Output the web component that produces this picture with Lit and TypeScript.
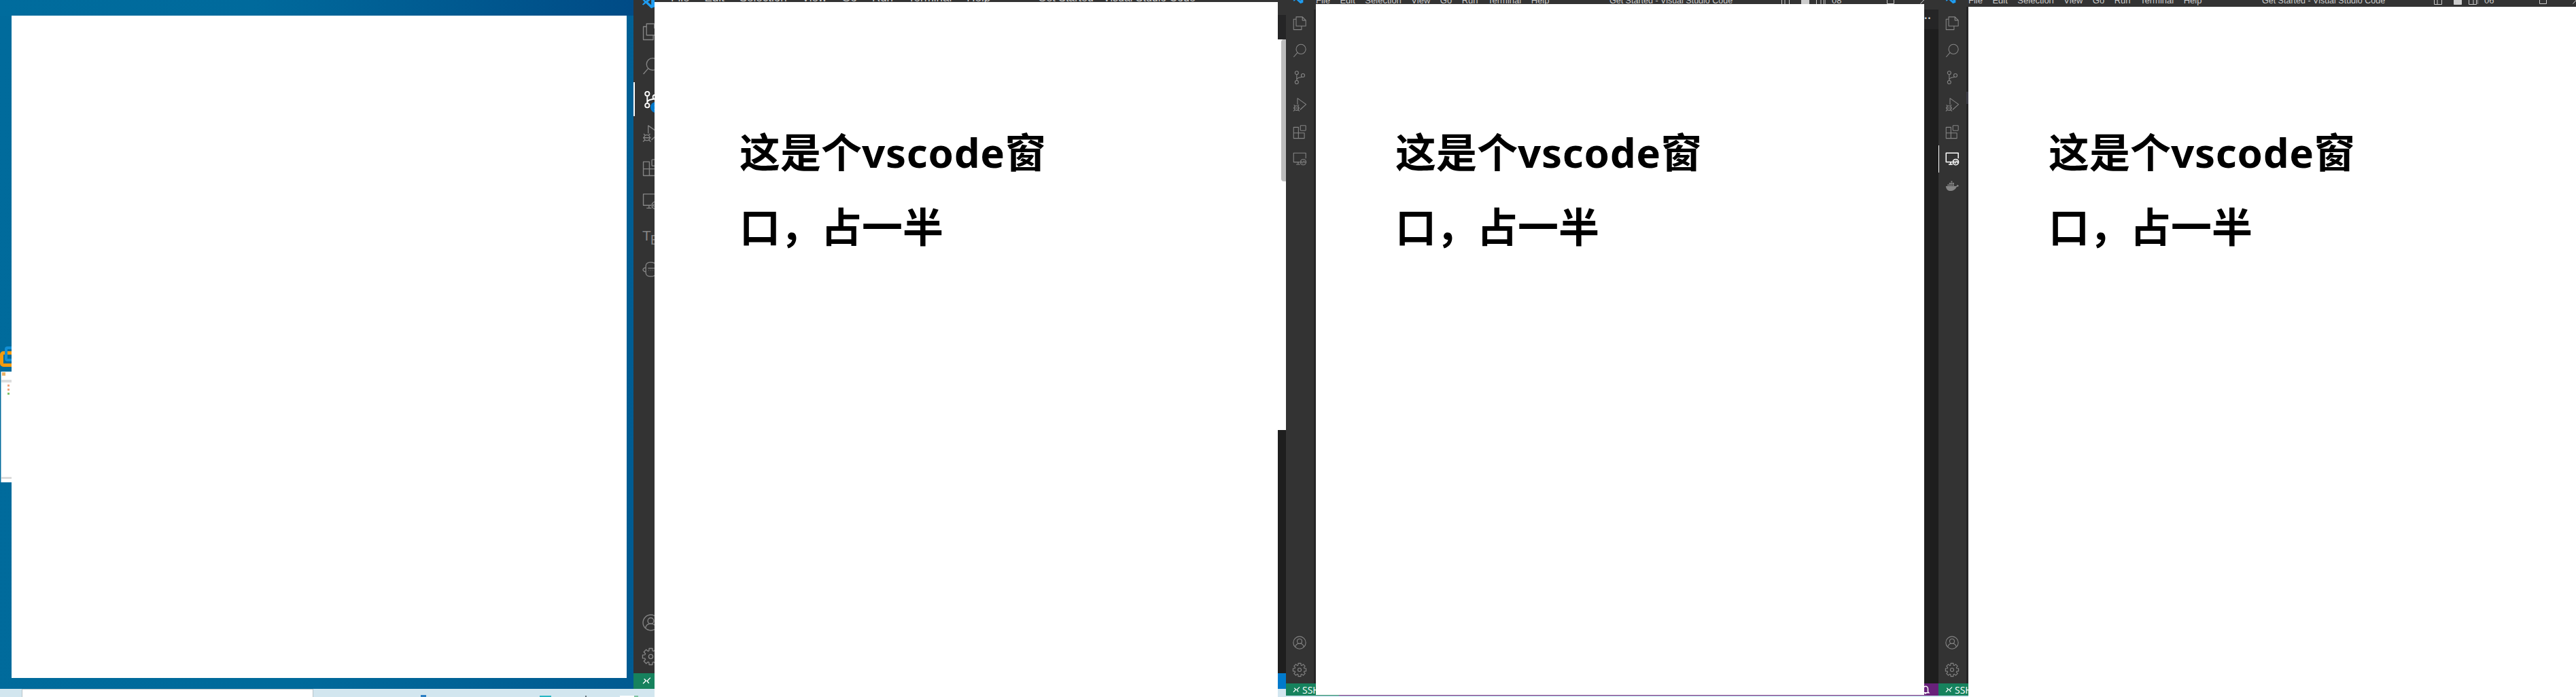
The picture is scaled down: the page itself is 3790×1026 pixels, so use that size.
import { LitElement, css, html, svg } from 'lit';
import { customElement, property } from 'lit/decorators.js';
import { styleMap } from 'lit/directives/style-map.js';

// Контур шестерёнки: 8 зубцов
const gearPath = () => {
  const points: string[] = [];
  for (let i = 0; i < 8; i++) {
    const a = (i * Math.PI) / 4;
    const at = (r: number, d: number) =>
      `${(12 + r * Math.cos(a + d)).toFixed(2)} ${(12 + r * Math.sin(a + d)).toFixed(2)}`;
    points.push(at(8.6, -0.3), at(11.8, -0.2), at(11.8, 0.2), at(8.6, 0.3));
  }
  return `M${points.join('L')}z`;
};

// Значки панели активности, сетка 24x24
const ICONS: Record<string, unknown> = {
  files: svg`<path d="M6 1H17L23 7V17H6zM17 1V7H23M6 5H1.500V23.500H15.500V17"/>`,
  search: svg`<circle cx="14.500" cy="10" r="8.500"/><path d="M8.500 16 1.500 24"/>`,
  git: svg`<circle cx="7" cy="3.800" r="3"/><circle cx="7" cy="20.400" r="3"/><circle cx="18" cy="8.400" r="3"/><path d="M7 6.800V17.400M7 16c.5-3 3-3.500 5.500-4 2.500-.5 3.500-.8 4.200-1"/>`,
  debug: svg`<path d="M8.400 12V.8L23.500 11.500 13 21"/><circle cx="6.500" cy="18" r="4"/><path d="M2 12.500 4 14.500M11 12.500 9 14.500M1 18H12M1 23.500l3-2.500M12 23.500l-3-2.500"/>`,
  extensions: svg`<rect x="13.500" y=".8" width="9.500" height="9" rx="1"/><path d="M1.500 4H10V14H20.500V23.500H1.500zM1.500 14H10V23.500"/>`,
  remote: svg`<path d="M12.500 17.500H1.500V1.500H23V11M6 21.500H13M9.500 17.500V21.500"/><circle cx="18.500" cy="17.500" r="5"/><path d="M17.500 20l2-5M16.500 16l-1.500 1.500 1.500 1.500M20.500 16l1.500 1.500-1.500 1.500"/>`,
  account: svg`<circle cx="12" cy="12" r="11"/><circle cx="12" cy="9.500" r="4.200"/><path d="M4.500 20c.5-4 3-6.500 7.500-6.500s7 2.500 7.500 6.500"/>`,
  gear: svg`<path d=${gearPath()}/><circle cx="12" cy="12" r="3"/>`,
  face: svg`<path d="M5 7C5 3.500 8 2 12 2s7 1.500 7 5v10c0 3.500-3 5-7 5s-7-1.500-7-5zM5 9.500C2.500 10 1 11 1 12.500S2.500 15 5 15.500M19 9.500c2.500.5 4 1.500 4 3s-1.500 2.500-4 3M8 10.500H19M9 13.500h.5M12 13.500h.5M15 13.500h.5"/>`,
  docker: svg`<path fill="#858585" stroke="none" d="M1 12H19.500C20.500 11 21 10 20.500 9.500L22 10C23 10.500 24 11 24 11.500 23 13 21.500 13.500 20 13.500 18 18 14 20.500 9 20.500 4 20.500 1.500 17 1 12z"/><path fill="#858585" stroke="none" d="M4 9h2.500v2.500H4zM7 9h2.500v2.500H7zM10 9h2.500v2.500H10zM13 9h2.500v2.500H13zM7 6h2.500v2.500H7zM10 6h2.500v2.500H10zM13 6h2.500v2.500H13zM10 3h2.500v2.500H10z"/>`,
};

type BarItem = { name: string; active?: boolean };

@customElement('activity-bar')
export class ActivityBar extends LitElement {
  // Шаг значков: 40 или 50
  @property({ type: Number }) pitch = 40;

  // Верхние значки
  @property({ attribute: false }) items: BarItem[] = [];

  static styles = css`
    :host {
      display: flex;
      flex-direction: column;
      height: 100%;
      background: #333333;
      box-sizing: border-box;
    }

    .bar__top,
    .bar__bottom {
      display: flex;
      flex-direction: column;
    }

    .bar__bottom {
      margin-top: auto;
    }

    .bar__slot {
      position: relative;
      display: flex;
      align-items: center;
      box-sizing: border-box;
    }

    .bar__slot svg {
      display: block;
      flex: none;
      fill: none;
      stroke: #858585;
      stroke-width: 1.300;
      stroke-linejoin: round;
      overflow: visible;
    }

    .bar__slot--active svg {
      stroke: #ffffff;
      stroke-width: 1.800;
    }

    .bar__marker {
      position: absolute;
      left: 0;
      top: 0;
      bottom: 0;
      background: #ffffff;
    }

    .bar__tex {
      color: #858585;
      font-family: 'Liberation Sans', sans-serif;
      font-size: 21px;
      line-height: 1;
      white-space: nowrap;
    }

    .bar__tex-e {
      position: relative;
      top: 6px;
      margin-left: -1px;
    }

    .bar__badge {
      position: absolute;
      left: 25px;
      top: 29px;
      width: 16px;
      height: 16px;
      border-radius: 50%;
      background: #007acc;
      color: #fff;
      font: 700 10px 'Liberation Sans', sans-serif;
      display: flex;
      align-items: center;
      justify-content: center;
    }
  `;

  private slotStyle(iconLeft: number) {
    return styleMap({ height: `${this.pitch}px`, paddingLeft: `${iconLeft}px` });
  }

  private renderItem(item: BarItem) {
    const big = this.pitch === 50;
    const size = big ? 25 : 20;
    const left = big ? 13 : 10;
    if (item.name === 'tex') {
      return html`<div class="bar__slot" style=${this.slotStyle(left)}>
        <span class="bar__tex">T<span class="bar__tex-e">E</span>X</span>
      </div>`;
    }
    return html`<div class="bar__slot ${item.active ? 'bar__slot--active' : ''}" style=${this.slotStyle(left)}>
      ${item.active
        ? html`<span class="bar__marker" style=${styleMap({ width: big ? '2px' : '1px' })}></span>`
        : ''}
      <svg viewBox="0 0 24 24" width=${size} height=${size}>${ICONS[item.name]}</svg>
      ${item.active && big ? html`<span class="bar__badge">1</span>` : ''}
    </div>`;
  }

  render() {
    const big = this.pitch === 50;
    return html`
      <div class="bar__top" style=${styleMap({ marginTop: big ? '21px' : '14px' })}>
        ${this.items.map((item) => this.renderItem(item))}
      </div>
      <div class="bar__bottom" style=${styleMap({ marginBottom: big ? '0' : '0' })}>
        ${this.renderItem({ name: 'account' })} ${this.renderItem({ name: 'gear' })}
      </div>
    `;
  }
}

@customElement('app-root')
export class AppRoot extends LitElement {
  static styles = css`
    :host {
      display: flex;
      width: 3790px;
      height: 1026px;
      overflow: hidden;
      background: #d2e6ef;
      font-family: 'Noto Sans', 'Noto Sans CJK SC', sans-serif;
    }

    .desktop {
      width: 932px;
      flex: none;
      display: flex;
      flex-direction: column;
    }

    .desktop__wall {
      height: 1014px;
      flex: none;
      box-sizing: border-box;
      padding: 23px 10px 16px 17px;
      background: linear-gradient(100deg, #006b9c 0%, #006a9b 55%, #005a91 100%);
      position: relative;
      overflow: hidden;
    }

    .desktop__wall::before {
      content: '';
      position: absolute;
      left: 0;
      right: 0;
      top: 0;
      height: 23px;
      background: linear-gradient(90deg, #006c9d 0%, #006a9c 40%, #004b86 100%);
    }

    .desktop__window {
      height: 100%;
      background: #fff;
      position: relative;
    }

    .desktop__strip {
      flex: 1;
      display: flex;
      align-items: flex-end;
      padding-left: 32px;
    }

    .desktop__search {
      width: 429px;
      height: 100%;
      flex: none;
      box-sizing: border-box;
      background: #fff;
      border: 1px solid #b9c4c9;
      border-bottom: 0;
    }

    .crumb {
      flex: none;
      height: 2px;
    }

    .tile {
      position: absolute;
      left: 0;
      top: 517px;
      width: 30px;
      height: 23px;
      box-sizing: border-box;
      border: 5px solid #f39a0e;
      border-radius: 5px;
    }

    .tile--blue {
      left: 7px;
      top: 510px;
      width: 20px;
      height: 22px;
      border: 4px solid #1290d6;
      border-radius: 4px;
    }

    .thumb {
      position: absolute;
      left: 1px;
      top: 547px;
      width: 16px;
      height: 163px;
      box-sizing: border-box;
      background: #fff;
      border-left: 1px solid #8fbcd2;
      display: flex;
      flex-direction: column;
    }

    .thumb__head {
      height: 5px;
      width: 5px;
      margin: 1px 0 0 1px;
      background: #e9b36a;
    }

    .thumb__band {
      height: 4px;
      margin-top: 6px;
      background: #dddddd;
    }

    .thumb__tick {
      width: 3px;
      height: 3px;
      margin: 3px 0 0 9px;
    }

    .thumb__foot {
      height: 3px;
      margin-top: auto;
      margin-bottom: 5px;
      background: #dcdcdc;
    }

    .side {
      flex: none;
      display: flex;
      flex-direction: column;
      background: #333333;
      overflow: hidden;
      position: relative;
    }

    .side__body {
      flex: 1;
      min-height: 0;
    }

    .side--one {
      width: 31px;
      height: 1014px;
    }

    .status {
      flex: none;
      height: 23px;
      padding-left: 13px;
      background: #16825d;
      display: flex;
      align-items: center;
    }

    .status svg,
    .code__status svg {
      flex: none;
      fill: none;
      stroke: #fff;
      stroke-width: 1.300;
    }

    .logo {
      position: absolute;
      z-index: 1;
      fill: #1f9cf0;
    }

    .pane {
      flex: none;
      display: flex;
      flex-direction: column;
      background: #333333;
    }

    .pane__body {
      flex: 1;
      min-height: 0;
      background: #fff;
      box-sizing: border-box;
    }

    .pane__foot {
      flex: none;
      display: flex;
      height: 1px;
      background: #68217a;
    }

    .pane__foot-ssh {
      width: 34px;
      background: #16825d;
    }

    .title {
      flex: none;
      overflow-x: visible;
      overflow-y: clip;
      white-space: nowrap;
      color: #cccccc;
    }

    .title__row {
      display: grid;
      grid-template-columns: 432px 252px 1fr;
      margin-top: -6px;
      font: 13px/14px 'Liberation Sans', sans-serif;
    }

    .title__row--big {
      grid-template-columns: 540px 1fr;
      margin-top: -12px;
      padding-left: 24px;
      font-size: 17px;
      line-height: 18px;
    }

    .title__menu {
      display: flex;
      gap: 14.500px;
    }

    .title__row--big .title__menu {
      gap: 22px;
    }

    .title__name {
      font-size: 12.500px;
    }

    .title__row--big .title__name {
      font-size: 16px;
    }

    .title__controls {
      display: flex;
      align-items: flex-start;
    }

    .title__controls svg {
      flex: none;
      fill: none;
      stroke: #cccccc;
      stroke-width: 1;
    }

    .title__rule {
      flex: none;
      width: 1px;
      height: 12px;
      background: #999999;
    }

    .note {
      margin: 0;
      width: 470px;
      font-size: 60px;
      font-weight: 700;
      line-height: 110px;
      color: #000;
    }

    .note__latin {
      letter-spacing: 0.700px;
    }

    .gap {
      flex: none;
      display: flex;
      flex-direction: column;
      background: #1e1e1e;
      height: 1024px;
    }

    .gap--two {
      width: 12px;
      height: 1014px;
    }

    .gap--three {
      width: 21px;
    }

    .gap__tab {
      height: 14px;
      background: #333333;
      flex: none;
    }

    .gap__head {
      height: 29px;
      background: #252526;
      flex: none;
      color: #cccccc;
      font: 700 16px/26px 'Liberation Sans', sans-serif;
      overflow: hidden;
    }

    .gap--two .gap__tab {
      height: 22px;
    }

    .gap--two .gap__head {
      height: 36px;
    }

    .gap__body {
      flex: 1;
    }

    .gap__scroll {
      height: 575px;
      flex: none;
      background: #fff;
      display: flex;
      justify-content: flex-end;
      align-items: flex-start;
    }

    .gap__thumb {
      width: 7px;
      height: 209px;
      background: #bdbdbd;
      border-radius: 4px 0 0 4px;
    }

    .gap__blue {
      height: 23px;
      flex: none;
      background: #007acc;
    }

    .gap__status {
      height: 18px;
      flex: none;
      background: #68217a;
      display: flex;
      align-items: center;
      overflow: hidden;
    }

    .gap__status svg {
      flex: none;
      fill: none;
      stroke: #fff;
      stroke-width: 1.300;
      margin-left: -5px;
    }

    .code {
      flex: none;
      width: 44px;
      height: 1024px;
      display: flex;
      flex-direction: column;
      position: relative;
      overflow: hidden;
      background: #333333;
    }

    .code__rows {
      display: flex;
      flex: 1;
      min-height: 0;
    }

    .code__bar {
      width: 41px;
      flex: none;
    }

    .code__rail {
      width: 3px;
      flex: none;
      background: #252526;
    }

    .code__rail-thumb {
      height: 18px;
      margin-top: 125px;
      background: #3c3c46;
    }

    .code__status {
      height: 18px;
      flex: none;
      background: #16825d;
      color: #fff;
      display: flex;
      align-items: center;
      overflow: hidden;
      font: 14px 'Open Sans', sans-serif;
      white-space: nowrap;
      padding-left: 10px;
      gap: 3px;
    }
  `;

  private remoteGlyph(size: number) {
    return svg`<svg viewBox="0 0 12 12" width=${size} height=${size}><path d="M1 9.500 5 5.500 2.500 3M11 1.500 6.500 6 9 9"/></svg>`;
  }

  private logo(left: number, top: number, size: number) {
    return svg`<svg class="logo" viewBox="0 0 24 24" width=${size} height=${size} style=${styleMap({ left: `${left}px`, top: `${top}px` })}><path d="M17 1 7.500 10 3 6.500 1 7.500 5 12 1 16.500 3 17.500 7.500 14 17 23l6-2.500v-17zM17 7v10l-6-5z"/></svg>`;
  }

  private menu() {
    return html`<div class="title__menu">
      <span>File</span><span>Edit</span><span>Selection</span><span>View</span><span>Go</span>
      <span>Run</span><span>Terminal</span><span>Help</span>
    </div>`;
  }

  // Строка заголовка над белой областью
  private title(height: number, layoutLabel: string) {
    return html`<div class="title" style=${styleMap({ height: `${height}px` })}>
      <div class="title__row">
        ${this.menu()}
        <span class="title__name">Get Started - Visual Studio Code</span>
        <div class="title__controls">
          <svg viewBox="0 0 14 14" width="14" height="14"><path d="M1.500 .5H12.500V12.500H1.500zM6 .5V12.500"/></svg>
          <svg viewBox="0 0 14 14" width="14" height="14" style="margin-left:15px"><path fill="#cccccc" d="M1.500 .5H12.500V12.500H1.500zM1.500 8H12.500"/></svg>
          <svg viewBox="0 0 14 14" width="14" height="14" style="margin-left:8px"><path d="M1.500 .5H12.500V12.500H1.500zM8 .5V12.500"/></svg>
          <span class="title__rule"></span>
          <span style="margin-left:9px;width:14px">${layoutLabel}</span>
          <svg viewBox="0 0 11 12" width="11" height="12" style="margin-left:67px"><path d="M.5 .5H10.500V11.500H.5z"/></svg>
          <svg viewBox="0 0 11 12" width="11" height="12" style="margin-left:38px"><path d="M.5 .5 10.500 11.500M10.500 .5 .5 11.500"/></svg>
        </div>
      </div>
    </div>`;
  }

  // Панель vscode слева от белой области
  private code(items: BarItem[], railTop: number, railThumb: boolean) {
    return html`<div class="code">
      ${this.logo(10, -10, 16)}
      <div class="code__rows">
        <div class="code__bar"><activity-bar .items=${items} .pitch=${40}></activity-bar></div>
        <div class="code__rail" style=${styleMap({ marginTop: `${railTop}px` })}>
          ${railThumb ? html`<div class="code__rail-thumb"></div>` : ''}
        </div>
      </div>
      <div class="code__status">${this.remoteGlyph(11)}<span>SSH:</span></div>
    </div>`;
  }

  render() {
    const base: BarItem[] = [
      { name: 'files' },
      { name: 'search' },
      { name: 'git' },
      { name: 'debug' },
      { name: 'extensions' },
    ];
    const note = html`<p class="note">这是个<span class="note__latin">vscode</span>窗口，占一半</p>`;

    return html`
      <div class="desktop">
        <div class="desktop__wall">
          <div class="tile"></div>
          <div class="tile tile--blue"></div>
          <div class="thumb">
            <div class="thumb__head"></div>
            <div class="thumb__band"></div>
            <div class="thumb__tick" style="background:#f2a27c"></div>
            <div class="thumb__tick" style="background:#f2a27c"></div>
            <div class="thumb__tick" style="background:#7cc36a"></div>
            <div class="thumb__foot"></div>
          </div>
          <div class="desktop__window"></div>
        </div>
        <div class="desktop__strip">
          <div class="desktop__search"></div>
          <span class="crumb" style="margin-left:158px;width:8px;height:3px;background:#2b7fc4"></span>
          <span class="crumb" style="margin-left:167px;width:17px;background:#27b6c4"></span>
          <span class="crumb" style="margin-left:50px;width:2px;background:#5c6b73"></span>
          <span class="crumb" style="margin-left:49px;width:21px;background:#fff"></span>
          <span class="crumb" style="width:6px;background:#7cc3a0"></span>
        </div>
      </div>

      <div class="side side--one">
        ${this.logo(12, -7, 20)}
        <div class="side__body">
          <activity-bar
            .pitch=${50}
            .items=${[
              ...base.map((item) => (item.name === 'git' ? { ...item, active: true } : item)),
              { name: 'remote' },
              { name: 'tex' },
              { name: 'face' },
            ]}
          ></activity-bar>
        </div>
        <div class="status">${this.remoteGlyph(13)}</div>
      </div>

      <div class="pane" style="width:917px">
        <div class="title" style="height:3px">
          <div class="title__row title__row--big">
            ${this.menu()}
            <span class="title__name">Get Started - Visual Studio Code</span>
          </div>
        </div>
        <div class="pane__body" style="padding:166px 0 0 125px">${note}</div>
      </div>

      <div class="gap gap--two">
        <div class="gap__tab"></div>
        <div class="gap__head"></div>
        <div class="gap__scroll"><div class="gap__thumb"></div></div>
        <div class="gap__body"></div>
        <div class="gap__blue"></div>
      </div>

      ${this.code([...base, { name: 'remote' }], 14, false)}

      <div class="pane" style="width:895px;height:1024px">
        ${this.title(6, '08')}
        <div class="pane__body" style="padding:163px 0 0 117px">${note}</div>
        <div class="pane__foot"><div class="pane__foot-ssh"></div></div>
      </div>

      <div class="gap gap--three">
        <div class="gap__tab"></div>
        <div class="gap__head">··</div>
        <div class="gap__body"></div>
        <div class="gap__status">
          <svg viewBox="0 0 12 12" width="14" height="14"><path d="M3 9V5a3 3 0 0 1 6 0v4l1 1H2zM5 11h2"/></svg>
        </div>
      </div>

      ${this.code([...base, { name: 'remote', active: true }, { name: 'docker' }], 10, true)}

      <div class="pane" style="width:894px">
        ${this.title(10, '06')}
        <div class="pane__body" style="padding:159px 0 0 118px">${note}</div>
      </div>
    `;
  }
}
